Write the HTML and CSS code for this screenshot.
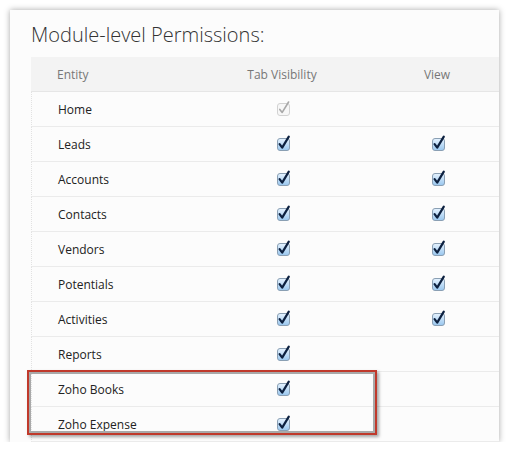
FILE: index.html
```html
<!DOCTYPE html>
<html>
<head>
<meta charset="utf-8">
<link rel="stylesheet" href="styles.css">
</head>
<body>
<svg width="0" height="0" class="defs">
  <defs>
    <linearGradient id="cbfill" x1="0" y1="0" x2="0" y2="1">
      <stop offset="0" stop-color="#e6f3ff"/>
      <stop offset="1" stop-color="#98c6ee"/>
    </linearGradient>
    <symbol id="cb-on" viewBox="0 0 14 16">
      <rect x="0.5" y="3.5" width="12" height="12" rx="2.5" fill="url(#cbfill)" stroke="#8a9fb3"/>
      <path d="M2.6 9.2 L5.2 12.6 L11.8 1.6" fill="none" stroke="#0d2140" stroke-width="2.2" stroke-linecap="round" stroke-linejoin="round"/>
    </symbol>
    <symbol id="cb-off" viewBox="0 0 14 16">
      <rect x="0.5" y="3.5" width="12" height="12" rx="2.5" fill="#f7f7f7" stroke="#d2d2d2"/>
      <path d="M2.8 9.4 L5.2 12.4 L11.6 2" fill="none" stroke="#a8a8a8" stroke-width="1.6" stroke-linecap="round" stroke-linejoin="round"/>
    </symbol>
  </defs>
</svg>
<div class="card">
  <h1 class="title">Module-level Permissions:</h1>
  <div class="table">
    <div class="row head">
      <div class="cell name">Entity</div>
      <div class="cell mid">Tab Visibility</div>
      <div class="cell mid">View</div>
    </div>
    <div class="row">
      <div class="cell name">Home</div>
      <div class="cell mid"><svg class="cb"><use href="#cb-off"/></svg></div>
      <div class="cell mid"></div>
    </div>
    <div class="row">
      <div class="cell name">Leads</div>
      <div class="cell mid"><svg class="cb"><use href="#cb-on"/></svg></div>
      <div class="cell mid"><svg class="cb"><use href="#cb-on"/></svg></div>
    </div>
    <div class="row">
      <div class="cell name">Accounts</div>
      <div class="cell mid"><svg class="cb"><use href="#cb-on"/></svg></div>
      <div class="cell mid"><svg class="cb"><use href="#cb-on"/></svg></div>
    </div>
    <div class="row">
      <div class="cell name">Contacts</div>
      <div class="cell mid"><svg class="cb"><use href="#cb-on"/></svg></div>
      <div class="cell mid"><svg class="cb"><use href="#cb-on"/></svg></div>
    </div>
    <div class="row">
      <div class="cell name">Vendors</div>
      <div class="cell mid"><svg class="cb"><use href="#cb-on"/></svg></div>
      <div class="cell mid"><svg class="cb"><use href="#cb-on"/></svg></div>
    </div>
    <div class="row">
      <div class="cell name">Potentials</div>
      <div class="cell mid"><svg class="cb"><use href="#cb-on"/></svg></div>
      <div class="cell mid"><svg class="cb"><use href="#cb-on"/></svg></div>
    </div>
    <div class="row">
      <div class="cell name">Activities</div>
      <div class="cell mid"><svg class="cb"><use href="#cb-on"/></svg></div>
      <div class="cell mid"><svg class="cb"><use href="#cb-on"/></svg></div>
    </div>
    <div class="row">
      <div class="cell name">Reports</div>
      <div class="cell mid"><svg class="cb"><use href="#cb-on"/></svg></div>
      <div class="cell mid"></div>
    </div>
    <div class="row">
      <div class="cell name">Zoho Books</div>
      <div class="cell mid"><svg class="cb"><use href="#cb-on"/></svg></div>
      <div class="cell mid"></div>
    </div>
    <div class="row">
      <div class="cell name">Zoho Expense</div>
      <div class="cell mid"><svg class="cb"><use href="#cb-on"/></svg></div>
      <div class="cell mid"></div>
    </div>
  </div>
  <div class="highlight"></div>
</div>
</body>
</html>
```
FILE: styles.css
```css
html, body {
  margin: 0;
  padding: 0;
  background: #ffffff;
}
.defs {
  position: absolute;
  width: 0;
  height: 0;
}
.card {
  position: relative;
  margin: 10px 0 0 10px;
  width: 489px;
  height: 432px;
  background: #fcfcfc;
  box-shadow: 0 0 6px rgba(0, 0, 0, 0.35);
  overflow: hidden;
  font-family: "Open Sans", "Noto Sans", sans-serif;
}
.title {
  margin: 0;
  height: 47px;
  box-sizing: border-box;
  padding: 10px 0 0 21px;
  font-size: 20px;
  font-weight: 300;
  line-height: 30px;
  color: #333333;
}
.table {
  margin-left: 21px;
  width: 500px;
}
.row {
  display: grid;
  grid-template-columns: 181px 140px 170px;
  height: 35px;
  border-bottom: 1px solid #ebebeb;
  box-sizing: border-box;
  border-left: 1px dotted #e2e2e2;
}
.row.head {
  background: #f3f3f3;
  border-bottom: 1px solid #e6e6e6;
  border-left: none;
}
.cell {
  display: flex;
  align-items: center;
  font-size: 12px;
  color: #222222;
}
.cell.name {
  padding-left: 26px;
}
.row.head .cell {
  color: #777777;
}
.cell.mid {
  justify-content: center;
}
.cb {
  width: 14px;
  height: 16px;
  margin-top: -3px;
  margin-left: 2px;
}
.highlight {
  position: absolute;
  left: 17px;
  top: 360px;
  width: 346px;
  height: 61px;
  border: 2px solid #c0392b;
  box-shadow: inset 0 0 0 2px #a9a9a9, 2px 2px 3px rgba(0, 0, 0, 0.35);
}
```
